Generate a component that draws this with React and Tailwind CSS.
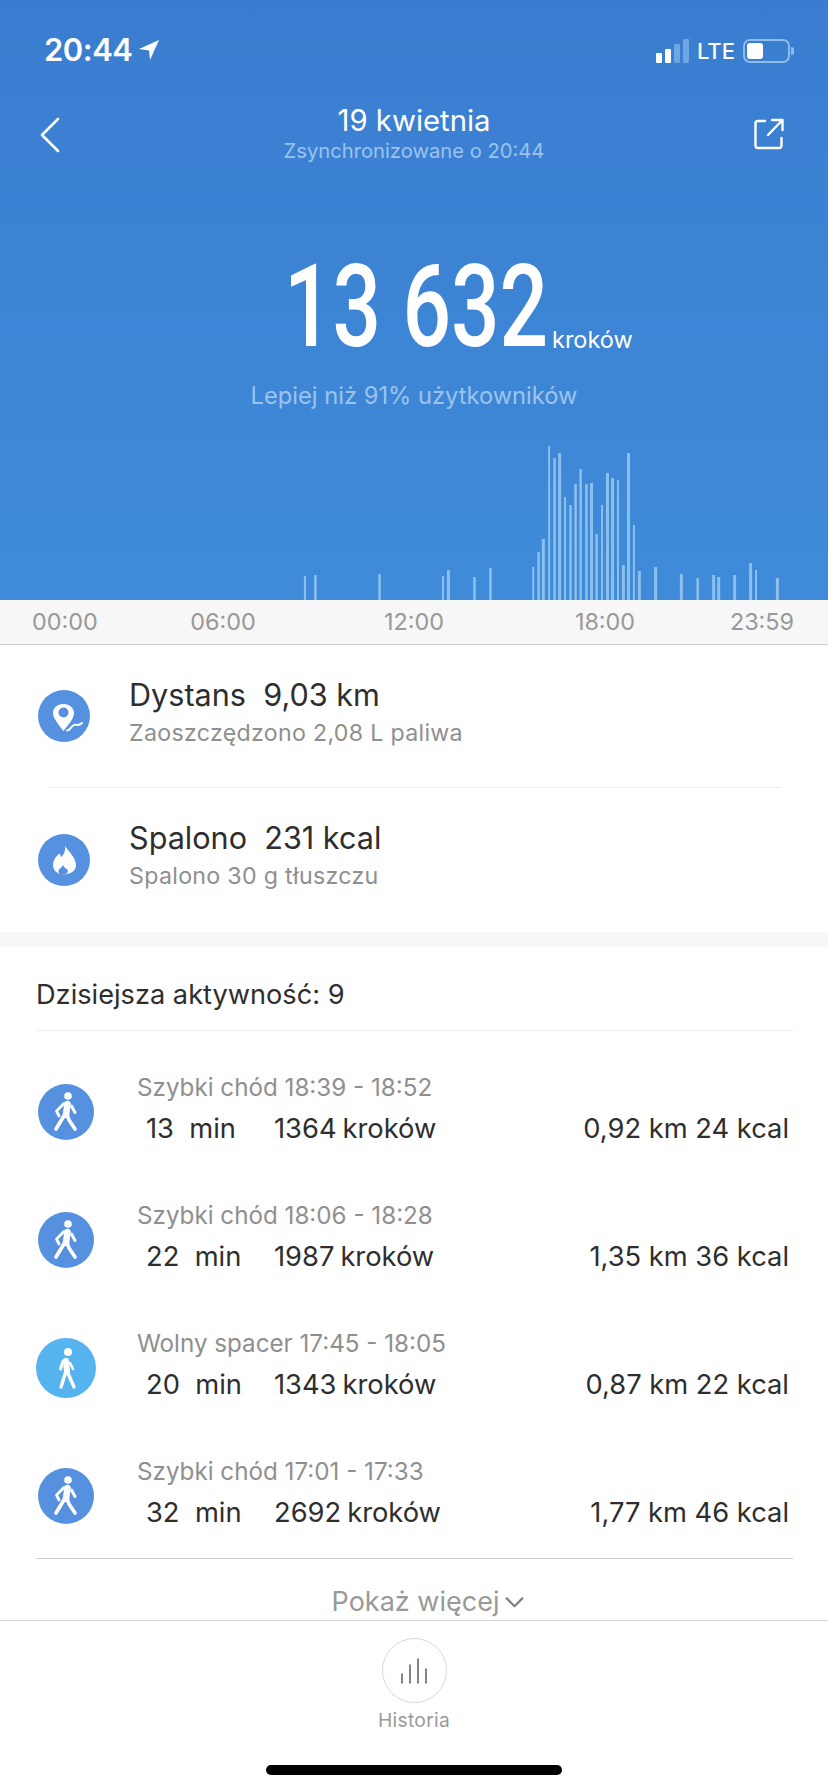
import React from "react";

const bars = [[124,438,2],[153,435,2.5],[330,432,2.5],[505,438,2],[520,420,3],[592,441,2.5],[636,414,2.5],[754,411,2],[769,366,2.5],[782,327,3],[798,48,2],[813,84,2.5],[827,69,3],[842,201,2],[857,225,2.5],[871,162,2.5],[885,117,2.5],[901,162,2.5],[915,159,3],[929,312,2.5],[944,225,2],[959,129,3],[973,144,3],[988,150,2],[1003,405,3],[1017,69,3],[1032,285,2],[1047,423,3],[1092,411,3],[1163,432,3],[1208,444,2.5],[1252,435,3],[1266,441,3],[1310,435,3],[1354,399,3],[1369,420,2],[1428,444,3]];

function Walker({ slow }) {
  if (slow) {
    return (
      <svg viewBox="0 0 60 60" className="w-[60px] h-[60px]" fill="none" stroke="white" strokeLinecap="round" strokeLinejoin="round">
        <circle cx="32" cy="14" r="4" fill="white" stroke="none" />
        <path d="M30 23 L31 34" strokeWidth="6" />
        <path d="M30 33 L25 49 M31 33 L38 49" strokeWidth="3.4" />
        <path d="M27 23 L24.5 31" strokeWidth="3" />
        <path d="M34 25 L37 31" strokeWidth="2.6" />
      </svg>
    );
  }
  return (
    <svg viewBox="0 0 56 56" className="w-[56px] h-[56px]" fill="none" stroke="white" strokeLinecap="round" strokeLinejoin="round">
      <circle cx="30" cy="12" r="3.8" fill="white" stroke="none" />
      <path d="M29.5 20 L28 31" strokeWidth="6.5" />
      <path d="M26.5 31 L18 45 M29 30 L31 36 L37 45" strokeWidth="3.6" />
      <path d="M26 19.5 L18.5 27 L21 32" strokeWidth="2.8" />
      <path d="M33.5 22 L37 28.5" strokeWidth="3" />
    </svg>
  );
}

const rows = [
  ["Szybki chód 18:39 - 18:52", "13", "min", "1364", "kroków", "0,92 km 24 kcal", false],
  ["Szybki chód 18:06 - 18:28", "22", "min", "1987", "kroków", "1,35 km 36 kcal", false],
  ["Wolny spacer 17:45 - 18:05", "20", "min", "1343", "kroków", "0,87 km 22 kcal", true],
  ["Szybki chód 17:01 - 17:33", "32", "min", "2692", "kroków", "1,77 km 46 kcal", false],
];

function Row({ r }) {
  return (
    <div className="h-[128px] flex items-center relative">
      <div className={r[6] ? "w-[60px] h-[60px] rounded-full bg-[#55b4ef] ml-[36px] shrink-0" : "w-[56px] h-[56px] rounded-full bg-[#5591df] ml-[38px] mr-[2px] shrink-0"}>
        <Walker slow={r[6]} />
      </div>
      <div className="ml-[41px] flex-1 mr-[39px] pb-[8px]">
        <div className="text-[24.2px] leading-[30px] text-[#8f8f8f] mb-[11px]">{r[0]}</div>
        <div className="flex items-center text-[27.3px] leading-[30px] text-[#2e2e2e]">
          <span className="ml-[9px] w-[128px] whitespace-pre">{r[1]}  {r[2]}</span>
          <span>{r[3]}<span className="ml-[6px]">{r[4]}</span></span>
          <span className="ml-auto">{r[5]}</span>
        </div>
      </div>
    </div>
  );
}

export default function App() {
  return (
    <div className="w-[828px] h-[1792px] bg-white overflow-hidden font-['Inter','Liberation_Sans',sans-serif]">
      <div className="h-[600px] bg-gradient-to-b from-[#3a7dd0] to-[#3f8bd9] flex flex-col text-white">
        <div className="h-[68px] flex items-end justify-between pl-[44px] pr-[34px]">
          <div className="flex items-center gap-[6px]">
            <span className="text-[31px] leading-[36px] font-semibold tracking-[-0.5px]">20:44</span>
            <svg viewBox="0 0 22 22" className="w-[22px] h-[22px]"><path d="M21 1 L1 10 L11 11.5 L12 21 Z" fill="white" /></svg>
          </div>
          <div className="flex items-center gap-[8px] mb-[5px]">
            <div className="flex items-end gap-[3px] h-[24px]">
              <span className="w-[6px] h-[10px] bg-white rounded-[1px]" />
              <span className="w-[6px] h-[14px] bg-white rounded-[1px]" />
              <span className="w-[6px] h-[19px] bg-[#6fa5e3] rounded-[1px]" />
              <span className="w-[6px] h-[24px] bg-[#6fa5e3] rounded-[1px]" />
            </div>
            <span className="text-[22px] leading-[24px] font-medium">LTE</span>
            <div className="flex items-center">
              <div className="w-[47px] h-[24px] rounded-[7px] border-2 border-[#8fbbea] p-[2px]">
                <div className="w-[16px] h-full bg-white rounded-[3px]" />
              </div>
              <span className="w-[3px] h-[8px] ml-[1px] bg-[#8fbbea] rounded-r-[2px]" />
            </div>
          </div>
        </div>
        <div className="h-[78px] mt-[34px] flex items-start pl-[39px] pr-[44px]">
          <div className="w-[35px] shrink-0">
            <svg viewBox="0 0 22 36" className="w-[22px] h-[36px] mt-[15px]" fill="none" stroke="white" strokeWidth="2.6" strokeLinecap="round" strokeLinejoin="round"><path d="M19 2 L3 18 L19 34" /></svg>
          </div>
          <div className="flex-1 text-center">
            <div className="text-[29.3px] leading-[36px] mt-[1px]">19 kwietnia</div>
            <div className="text-[20.2px] leading-[24px] text-[#9cc3ee]">Zsynchronizowane o 20:44</div>
          </div>
          <svg viewBox="0 0 30 32" className="w-[30px] h-[32px] mt-[16px] shrink-0" fill="none" stroke="white" strokeWidth="2.4" strokeLinecap="round" strokeLinejoin="round"><path d="M11 3 H4 Q1.5 3 1.5 5.5 V27.5 Q1.5 30 4 30 H25 Q27.5 30 27.5 27.5 V20" /><path d="M14 17 L28 2.5 M18 2 H28.5 V12" /></svg>
        </div>
        <div className="mt-[59px] h-[120px] flex items-end pl-[284px]">
          <span className="text-[115.5px] leading-[104px] font-medium font-['Roboto',sans-serif] w-[268px] whitespace-nowrap origin-left scale-x-[0.74]">13 632</span>
          <span className="text-[23.5px] leading-[30px] mb-[4px]">kroków</span>
        </div>
        <div className="text-center text-[23.7px] leading-[30px] mt-[22px] text-[#9cc3ee]">Lepiej niż 91% użytkowników</div>
        <svg viewBox="0 0 828 154" className="w-[828px] h-[154px] block mt-auto">
          {bars.map(([x, top, w], i) => (
            <rect key={i} x={260 + x / 2.76 - w / 2} y={top / 3 - 16} width={w} height={170 - top / 3} fill="#8cc0ec" />
          ))}
        </svg>
      </div>

      <div className="h-[45px] bg-[#f7f7f7] border-b border-[#cccccc] flex items-center pl-[32px] text-[23.4px] text-[#999999]">
        <span className="w-[66px] text-center">00:00</span>
        <span className="w-[66px] text-center ml-[92px]">06:00</span>
        <span className="w-[66px] text-center ml-[125px]">12:00</span>
        <span className="w-[66px] text-center ml-[125px]">18:00</span>
        <span className="w-[66px] text-center ml-[91px]">23:59</span>
      </div>

      <div className="h-[142px] flex items-center pl-[38px]">
        <svg viewBox="0 0 52 52" className="w-[52px] h-[52px] shrink-0">
          <circle cx="26" cy="26" r="26" fill="#5591df" />
          <path d="M25.5 14 C18.5 14 15 18.5 15 23 C15 28 20 34 25.5 41 C30 35 36 29 36 23 C36 18.5 32 14 25.5 14 Z" fill="white" />
          <circle cx="25.5" cy="22.5" r="5" fill="#5591df" />
          <path d="M29 40.5 C31 40.5 32 39 33.5 37 C35 35 37 34.5 39 35 C41 35 43 34 44 33" fill="none" stroke="white" strokeWidth="2" strokeLinecap="round" />
        </svg>
        <div className="ml-[39px] pb-[9px]">
          <div className="text-[30.6px] leading-[36px] text-[#2e2e2e] whitespace-pre">Dystans  9,03 km</div>
          <div className="text-[23.2px] leading-[28px] mt-[6px] text-[#8f8f8f] tracking-[0.3px]">Zaoszczędzono 2,08 L paliwa</div>
        </div>
      </div>
      <div className="h-px bg-[#eeeeee] ml-[48px] mr-[47px]" />
      <div className="h-[144px] flex items-center pl-[38px]">
        <svg viewBox="0 0 52 52" className="w-[52px] h-[52px] shrink-0">
          <circle cx="26" cy="26" r="26" fill="#5591df" />
          <path d="M27 12 C28 18 25 20 24 23 C22.5 22 22 20.5 21.5 19.5 C17 23 15 27 15 31 C15 37 20 40.5 26 40.5 C32 40.5 38 37 38 31 C38 24 31 18 27 12 Z" fill="white" />
          <path d="M25 31 C26 34 30 35 30 37 C30 39 28.5 40 27 40.6 H23.5 C21.5 40 20 38.5 20.5 36.5 C21 34.5 24 33.5 25 31 Z" fill="#5591df" />
        </svg>
        <div className="ml-[39px] pb-[10px]">
          <div className="text-[30.6px] leading-[36px] text-[#2e2e2e] whitespace-pre">Spalono  231 kcal</div>
          <div className="text-[23.2px] leading-[28px] mt-[6px] text-[#8f8f8f] tracking-[0.3px]">Spalono 30 g tłuszczu</div>
        </div>
      </div>
      <div className="h-[15px] bg-[#f7f7f7]" />

      <div className="ml-[36px] mr-[35px] h-[84px] pt-[14px] flex items-center border-b border-[#eeeeee] text-[27.2px] text-[#2e2e2e]">Dzisiejsza aktywność: 9</div>
      <div className="pt-[17px]">
        {rows.map((r) => <Row key={r[0]} r={r} />)}
      </div>
      <div className="h-px bg-[#cccccc] ml-[36px] mr-[35px] mt-[-2px]" />
      <div className="h-[61px] pt-[26px] pl-[28px] flex items-center justify-center gap-[6px] text-[27px] text-[#999999]">
        <span>Pokaż więcej</span>
        <svg viewBox="0 0 20 12" className="w-[19px] h-[11px]" fill="none" stroke="#808080" strokeWidth="2.4" strokeLinecap="round" strokeLinejoin="round"><path d="M1.5 1.5 L10 10 L18.5 1.5" /></svg>
      </div>
      <div className="h-px bg-[#d6d6d6]" />
      <div className="flex flex-col items-center pt-[17px]">
        <div className="w-[65px] h-[65px] rounded-full border border-[#d9d9d9] flex items-center justify-center">
          <svg viewBox="0 0 26 26" className="w-[26px] h-[26px]" stroke="#666666" strokeWidth="1.6" strokeLinecap="round"><path d="M1 16 V25 M9 7 V25 M17 1 V25 M25 11 V25" /></svg>
        </div>
        <div className="text-[19.2px] leading-[24px] mt-[5px] text-[#999999] tracking-[0.3px]">Historia</div>
        <div className="w-[296px] h-[10px] rounded-full bg-black mt-[33px]" />
      </div>
    </div>
  );
}
